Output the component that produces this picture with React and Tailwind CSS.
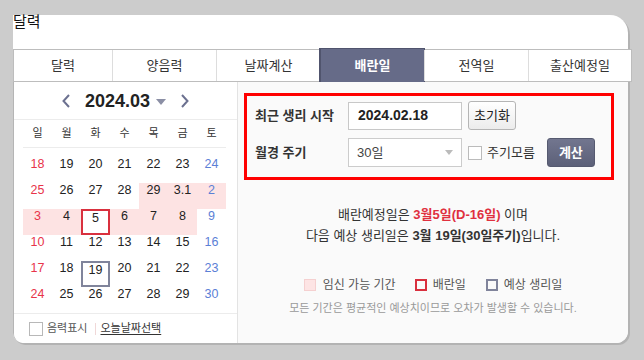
import React from 'react';

const tabs = ['달력', '양음력', '날짜계산', '배란일', '전역일', '출산예정일'];
const weekDays = ['일', '월', '화', '수', '목', '금', '토'];

const rows = [
  [18, 19, 20, 21, 22, 23, 24],
  [25, 26, 27, 28, 29, '3.1', 2],
  [3, 4, 5, 6, 7, 8, 9],
  [10, 11, 12, 13, 14, 15, 16],
  [17, 18, 19, 20, 21, 22, 23],
  [24, 25, 26, 27, 28, 29, 30],
];

// fertile window, ovulation day and next period
const isPink = (r, c) => (r === 1 && c >= 4) || (r === 2 && c <= 5);
const isOvulation = (r, c) => r === 2 && c === 2;
const isPeriod = (r, c) => r === 4 && c === 2;

function Chevron({ dir }) {
  return (
    <svg width="8" height="14" viewBox="0 0 8 14">
      <polyline
        points={dir === 'left' ? '7,1 1.5,7 7,13' : '1,1 6.5,7 1,13'}
        fill="none"
        stroke="#6c7190"
        strokeWidth="2"
      />
    </svg>
  );
}

function DayCell({ value, r, c }) {
  let color = 'text-[#222]';
  if (c === 0) color = 'text-[#e8344a]';
  if (c === 6) color = 'text-[#5b80d6]';

  let box = '';
  if (isOvulation(r, c)) box = 'border-2 border-[#d9303e] bg-white';
  else if (isPeriod(r, c)) box = 'border-2 border-[#80849b] bg-white';

  return (
    <div className={`h-[26px] ${isPink(r, c) ? 'bg-[#fde3e3]' : ''}`}>
      <div className={`h-[26px] w-full flex justify-center text-[12.5px] leading-[15px] ${color} ${box}`}>
        {value}
      </div>
    </div>
  );
}

function Calendar() {
  return (
    <div className="w-[224px] border-r border-[#e3e3e3] bg-white flex flex-col">
      {/* month header */}
      <div className="h-[38px] border-b border-[#ececec] flex items-center justify-center">
        <Chevron dir="left" />
        <span className="ml-[15px] text-[18px] font-bold text-[#222] leading-none">2024.03</span>
        <svg width="10" height="6" viewBox="0 0 10 6" className="ml-[6px] mt-[2px]">
          <polygon points="0,0 10,0 5,6" fill="#8b8fa5" />
        </svg>
        <span className="ml-[15px] flex">
          <Chevron dir="right" />
        </span>
      </div>

      {/* week days */}
      <div className="h-[28px] border-b border-[#ececec] grid grid-cols-7 w-[203px] ml-[9px] items-center">
        {weekDays.map((d) => (
          <div key={d} className="text-center text-[11px] text-[#333]">{d}</div>
        ))}
      </div>

      {/* days */}
      <div className="mt-[9px] ml-[9px] w-[203px] grid grid-cols-7">
        {rows.map((row, r) =>
          row.map((v, c) => <DayCell key={`${r}-${c}`} value={v} r={r} c={c} />)
        )}
      </div>

      {/* footer */}
      <div className="h-[30px] border-t border-[#ececec] flex items-center pl-[15px]">
        <span className="w-[14px] h-[14px] border border-[#b8b8b8] bg-white"></span>
        <span className="ml-[4px] text-[11px] text-[#555]">음력표시</span>
        <span className="ml-[8px] w-px h-[12px] bg-[#f0d8d8]"></span>
        <span className="ml-[4px] text-[11px] text-[#333] underline underline-offset-2">오늘날짜선택</span>
      </div>
    </div>
  );
}

function CalcForm() {
  return (
    <div className="mt-[11px] ml-[6px] w-[370px] h-[87px] border-[3px] border-[#ff0000] pl-[8px] pt-[5px]">
      <div className="flex items-center h-[29px]">
        <span className="w-[93px] text-[13px] font-bold text-[#333]">최근 생리 시작</span>
        <div className="w-[114px] h-[28px] border border-[#c8c8c8] bg-white flex items-center pl-[9px] text-[14px] font-bold text-[#222]">
          2024.02.18
        </div>
        <button className="ml-[6px] w-[48px] h-[29px] border border-[#b5b5b5] rounded-[3px] bg-gradient-to-b from-white to-[#ececec] text-[13px] text-[#222]">
          초기화
        </button>
      </div>
      <div className="flex items-center h-[29px] mt-[8px]">
        <span className="w-[93px] text-[13px] font-bold text-[#333]">월경 주기</span>
        <div className="w-[114px] h-[29px] border border-[#cccccc] bg-white flex items-center justify-between pl-[8px] pr-[8px] text-[13px] text-[#444]">
          <span>30일</span>
          <svg width="8" height="5" viewBox="0 0 8 5">
            <polygon points="0,0 8,0 4,5" fill="#bbbbbb" />
          </svg>
        </div>
        <span className="ml-[6px] w-[14px] h-[14px] border border-[#bbbbbb] bg-white"></span>
        <span className="ml-[5px] text-[13px] text-[#333]">주기모름</span>
        <button className="ml-[12px] w-[48px] h-[29px] rounded-[3px] bg-gradient-to-b from-[#72768f] to-[#5c6078] border border-[#565a70] text-[13px] font-bold text-white">
          계산
        </button>
      </div>
    </div>
  );
}

export default function App() {
  return (
    <div className="w-[644px] h-[360px] bg-[#cccccc] pt-[15px] pl-[13px] font-['Liberation_Sans','Noto_Sans_CJK_KR',sans-serif]">
      <div className="w-[615px] h-[328px] bg-white rounded-tr-[18px] rounded-br-[12px] rounded-bl-[10px] shadow-[2px_2px_0_#b3b3b3] flex flex-col">
        <div className="h-[34px]">
          <h1 className="text-[15px] leading-[16px] text-[#111] -mt-[1px]">달력</h1>
        </div>

        {/* tabs */}
        <div className="w-[619px] h-[33px] border border-[#bdbdbd] flex text-[13px] text-[#333] bg-white">
          {tabs.map((t, i) => {
            const active = t === '배란일';
            const width = i === 0 ? 'w-[98px]' : i === tabs.length - 1 ? 'flex-1' : 'w-[104px]';
            return (
              <div
                key={t}
                className={`${width} flex items-center justify-center ${i > 0 ? 'border-l' : ''} ${
                  active
                    ? 'bg-[#666b88] border-[#50546d] text-white font-bold -my-px outline outline-1 outline-[#50546d]'
                    : 'border-[#dddddd]'
                }`}
              >
                {t}
              </div>
            );
          })}
        </div>

        {/* body */}
        <div className="flex flex-1 border-l border-[#b5b5b5] rounded-bl-[10px] overflow-hidden">
          <Calendar />
          <div className="flex-1 bg-[#fafafa] rounded-br-[12px] flex flex-col">
            <CalcForm />
            <div className="mt-[24px] text-center text-[13px] leading-[21px] text-[#333]">
              <p>
                배란예정일은 <b className="text-[#e0303f]">3월5일(D-16일)</b> 이며
              </p>
              <p>
                다음 예상 생리일은 <b>3월 19일(30일주기)</b>입니다.
              </p>
            </div>
            <div className="mt-[31px] flex items-center justify-center text-[12px] leading-[16px] text-[#555]">
              <span className="w-[12px] h-[12px] bg-[#fde4e4] border border-[#f5d0d0]"></span>
              <span className="ml-[7px]">임신 가능 기간</span>
              <span className="ml-[19px] w-[12px] h-[12px] border-2 border-[#d9303e]"></span>
              <span className="ml-[6px]">배란일</span>
              <span className="ml-[20px] w-[12px] h-[12px] border-2 border-[#80849b]"></span>
              <span className="ml-[6px]">예상 생리일</span>
            </div>
            <p className="mt-[8px] text-center text-[11px] leading-[14px] text-[#999]">
              모든 기간은 평균적인 예상치이므로 오차가 발생할 수 있습니다.
            </p>
          </div>
        </div>
      </div>
    </div>
  );
}
